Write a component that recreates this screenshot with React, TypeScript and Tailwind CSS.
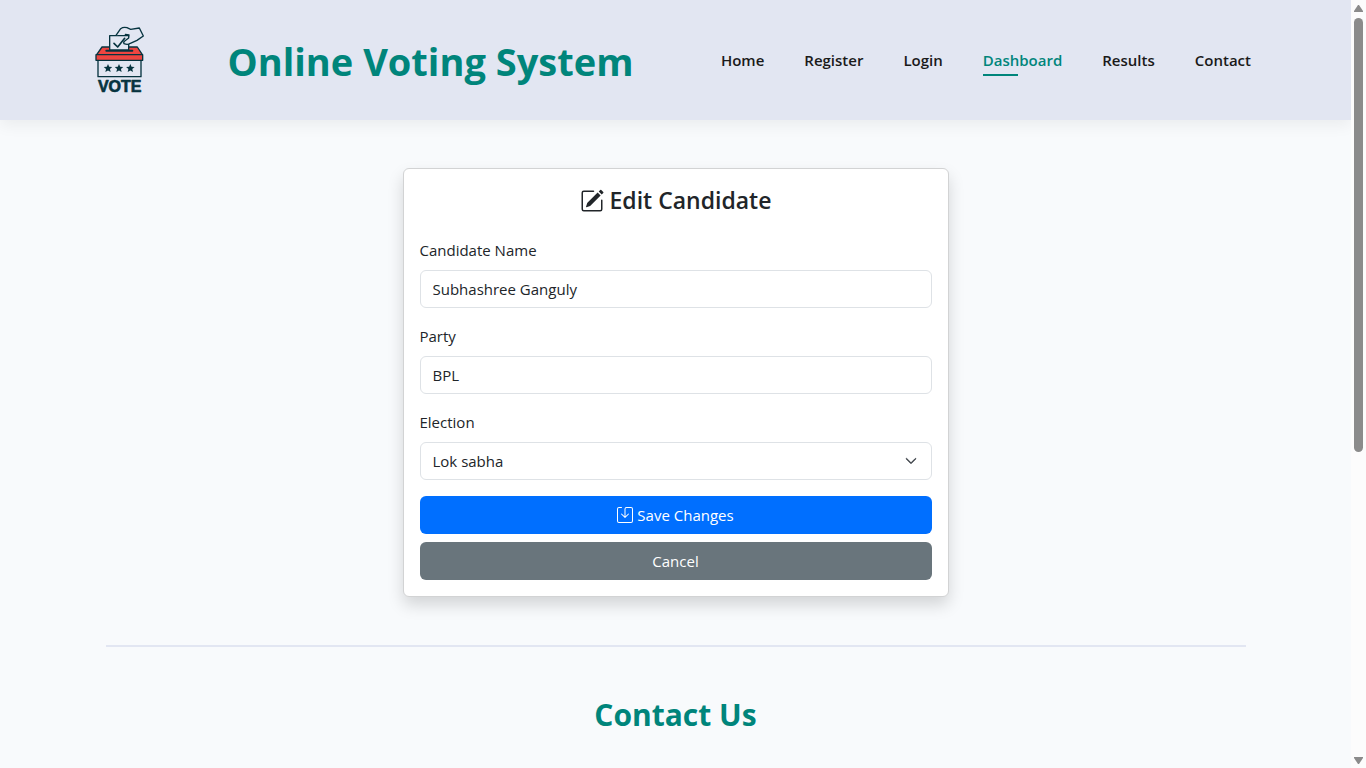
import { useState } from 'react';
import { BsPencilSquare, BsSave, BsChevronDown } from 'react-icons/bs';

const navItems = ['Home', 'Register', 'Login', 'Dashboard', 'Results', 'Contact'];

const fieldClass =
  'block h-[38px] w-full appearance-none rounded-md border border-[#dee2e6] bg-white px-3 text-[15px] leading-6 text-[#212529]';

function Star({ x }: { x: number }) {
  return (
    <path
      transform={`translate(${x} 145)`}
      d="M0-13 3.600-4.400 12.800-3.700 5.800 2.300 8 11.300 0 6.400-8 11.300-5.800 2.300-12.800-3.700-3.600-4.400Z"
      fill="#06333f"
      stroke="none"
    />
  );
}

function VoteLogo() {
  return (
    <svg
      className="size-20 shrink-0"
      viewBox="0 0 240 240"
      fill="none"
      stroke="#06333f"
      strokeWidth="4"
      strokeLinejoin="round"
      strokeLinecap="round"
      role="img"
      aria-label="Vote"
    >
      <path d="M66 81H172L187 104H50Z" fill="#ee4540" />
      <path d="M79 92H157" strokeWidth="6" />
      <path d="M89 47H146V90H89Z" fill="#e2e6f2" />
      <path d="M48 104H188V121H48Z" fill="#ee4540" />
      <path d="M54 121V170H183V121" />
      <path d="M102 70 113 81 134 55" strokeWidth="5" />
      <path
        d="M108 46 122 26Q130 20 141 23L152 28 178 24 190 48 171 61 151 70Q143 76 132 71 129 65 137 61L146 54 147 45 136 43"
        fill="#e2e6f2"
      />
      <Star x={84} />
      <Star x={117} />
      <Star x={151} />
      <text
        x="119"
        y="217"
        textAnchor="middle"
        fill="#06333f"
        strokeWidth="2"
        className="font-['Liberation_Sans',sans-serif] text-[48px] font-bold"
      >
        VOTE
      </text>
    </svg>
  );
}

function Header() {
  return (
    <header className="relative flex h-[120px] items-center justify-between bg-[#e2e6f2] px-20 shadow-[0_5px_15px_rgba(0,0,0,0.06)]">
      <VoteLogo />
      <h1 className="pt-0.5 text-[38px] leading-[48px] font-bold whitespace-nowrap text-[#00857b]">
        Online Voting System
      </h1>
      <nav>
        <ul className="flex items-center">
          {navItems.map((item) => {
            const active = item === 'Dashboard';
            return (
              <li key={item} className="px-5">
                <a
                  href={`#${item.toLowerCase()}`}
                  aria-current={active ? 'page' : undefined}
                  className={
                    active
                      ? 'relative text-[15px] leading-6 font-semibold text-[#00857b]'
                      : 'text-[15px] leading-6 font-semibold text-[#1a1a1a]'
                  }
                >
                  {item}
                  {active && <span className="absolute -bottom-1.5 left-0 h-0.5 w-[35px] bg-[#00857b]" />}
                </a>
              </li>
            );
          })}
        </ul>
      </nav>
    </header>
  );
}

function EditCandidateForm() {
  const [name, setName] = useState('Subhashree Ganguly');
  const [party, setParty] = useState('BPL');
  return (
    <form
      onSubmit={(e) => e.preventDefault()}
      className="mx-auto w-full max-w-[546px] rounded-md border border-[#d2d3d4] bg-white p-4 shadow-[0_8px_16px_rgba(0,0,0,0.15)]"
    >
      <h2 className="mb-[22px] flex items-center justify-center gap-1.5 text-[23px] leading-[31px] font-semibold">
        <BsPencilSquare className="size-6" />
        Edit Candidate
      </h2>
      <label htmlFor="name" className="mb-2 block">
        Candidate Name
      </label>
      <input id="name" className={fieldClass} value={name} onChange={(e) => setName(e.target.value)} />
      <label htmlFor="party" className="mt-4 mb-2 block">
        Party
      </label>
      <input id="party" className={fieldClass} value={party} onChange={(e) => setParty(e.target.value)} />
      <label htmlFor="election" className="mt-4 mb-2 block">
        Election
      </label>
      <div className="relative">
        <select id="election" className={fieldClass} defaultValue="Lok sabha">
          <option>Lok sabha</option>
        </select>
        <BsChevronDown className="pointer-events-none absolute top-[13px] right-[15px] size-3 stroke-1 text-[#343a40]" />
      </div>
      <button
        type="submit"
        className="mt-4 flex h-[38px] w-full items-center justify-center gap-1 rounded-md bg-[#006fff] text-white"
      >
        <BsSave className="size-4" />
        Save Changes
      </button>
      <a
        href="#dashboard"
        className="mt-2 flex h-[38px] w-full items-center justify-center rounded-md bg-[#69757c] text-white"
      >
        Cancel
      </a>
    </form>
  );
}

function ScrollTrack() {
  return (
    <div
      aria-hidden="true"
      className="sticky top-0 flex h-screen w-[15px] shrink-0 flex-col items-center bg-[#fcfcfc] pt-1 pb-[3px]"
    >
      <svg className="h-2 w-[9px] shrink-0" viewBox="0 0 9 8" fill="#8b8b8b">
        <path d="M4 1h1l4 6v1H0V7Z" />
      </svg>
      <div className="mt-1.5 mb-4 flex w-[9px] grow flex-col">
        <div className="h-[60%] rounded-full bg-[#8b8b8b]" />
      </div>
      <svg className="h-2 w-[9px] shrink-0" viewBox="0 0 9 8" fill="#8b8b8b">
        <path d="M4 7h1l4-6V0H0v1Z" />
      </svg>
    </div>
  );
}

export default function App() {
  return (
    <div className="flex min-h-screen items-start bg-[#f8fafc] font-['Open_Sans','Noto_Sans',sans-serif] text-[15px] leading-6 text-[#212529]">
      <div className="min-w-0 grow">
        <Header />
        <main className="mx-auto max-w-[1140px] pt-12">
          <EditCandidateForm />
          <hr className="mt-12 border-t-2 border-[#e2e6f2]" />
          <section id="contact" className="pt-12">
            <h2 className="text-center text-[30px] leading-10 font-bold text-[#00857b]">Contact Us</h2>
          </section>
        </main>
      </div>
      <ScrollTrack />
    </div>
  );
}
